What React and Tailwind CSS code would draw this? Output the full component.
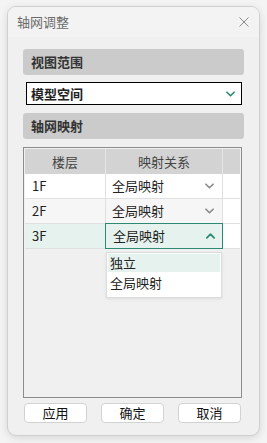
const font = { fontFamily: '"Noto Sans CJK SC", "Noto Sans", sans-serif' }

function ChevronDown({ className }) {
  return (
    <svg viewBox="0 0 10 6" className={className} fill="none">
      <path d="M1 1l4 4 4-4" stroke="currentColor" strokeWidth="1.8" strokeLinecap="round" strokeLinejoin="round" />
    </svg>
  )
}

function ChevronUp({ className }) {
  return (
    <svg viewBox="0 0 10 6" className={className} fill="none">
      <path d="M1 5l4-4 4 4" stroke="currentColor" strokeWidth="2" strokeLinecap="round" strokeLinejoin="round" />
    </svg>
  )
}

const rows = [
  { floor: '1F', value: '全局映射', bg: 'bg-white' },
  { floor: '2F', value: '全局映射', bg: 'bg-[#f6f6f6]' },
  { floor: '3F', value: '全局映射', bg: 'bg-[#e6f2ee]', active: true },
]

export default function App() {
  return (
    <div className="h-[443px] w-[267px] overflow-hidden bg-[#f4f4f4] pl-[7px] pt-[6px]" style={font}>
      <div className="flex h-[430px] w-[253px] flex-col overflow-hidden rounded-[9px] border border-[#cfcfcf] bg-[#f0f0f0] shadow-[0_2px_8px_rgba(0,0,0,0.12)]">
        {/* title bar */}
        <div className="flex h-[30px] shrink-0 items-center justify-between bg-[#f3f3f3] pl-[9px] pr-[10px]">
          <span className="text-[13px] text-[#6b6b6b]">轴网调整</span>
          <svg viewBox="0 0 10 10" className="h-[10px] w-[10px]" fill="none">
            <path d="M0.5 0.5l9 9M9.5 0.5l-9 9" stroke="#8a8a8a" strokeWidth="1" />
          </svg>
        </div>

        {/* body */}
        <div className="flex flex-1 flex-col px-[15px] pt-[12px]">
          <div className="flex h-[26px] items-center rounded-[3px] bg-[#cbcbcb] pl-[8px] text-[13px] font-bold text-[#333]">
            视图范围
          </div>

          <div className="ml-[3px] mr-[2px] mt-[7px] flex h-[23px] items-center justify-between border-[1.5px] border-black bg-white pl-[4px] pr-[6px]">
            <span className="text-[13px] font-semibold text-[#222]">模型空间</span>
            <ChevronDown className="h-[6px] w-[9px] text-[#2a8a72]" />
          </div>

          <div className="mt-[8px] flex h-[26px] items-center rounded-[3px] bg-[#cbcbcb] pl-[8px] text-[13px] font-bold text-[#333]">
            轴网映射
          </div>

          {/* table */}
          <div className="relative mr-[2px] mt-[8px] h-[251px] border border-[#8c8c8c] bg-[#f0f0f0] p-px">
            <div className="flex h-[25px] bg-[#d3d3d3] text-[13px] text-[#444]">
              <div className="flex w-[81px] items-center justify-center border-r border-[#e6e6e6]">楼层</div>
              <div className="flex w-[117px] items-center justify-center border-r border-[#e6e6e6]">映射关系</div>
              <div className="flex-1" />
            </div>
            {rows.map((r) => (
              <div key={r.floor} className={`flex h-[25px] border-b border-[#e0e0e0] text-[13px] text-[#222] ${r.bg}`}>
                <div className="flex w-[81px] items-center border-r border-[#e0e0e0] pl-[7px]">{r.floor}</div>
                {r.active ? (
                  <div className="-my-px -ml-px flex h-[26px] w-[118px] items-center justify-between border-[1.5px] border-[#2a8a72] pl-[7px] pr-[7px]">
                    <span>{r.value}</span>
                    <ChevronUp className="h-[6px] w-[9px] text-[#2a8a72]" />
                  </div>
                ) : (
                  <div className="flex w-[117px] items-center justify-between border-r border-[#e0e0e0] pl-[6px] pr-[8px]">
                    <span>{r.value}</span>
                    <ChevronDown className="h-[6px] w-[9px] text-[#8a8a8a]" />
                  </div>
                )}
                <div className="flex-1 bg-white" />
              </div>
            ))}

            {/* open dropdown */}
            <div className="absolute left-[82px] top-[104px] w-[116px] border border-[#dcdcdc] bg-white p-px text-[13px] text-[#222] shadow-[0_1px_3px_rgba(0,0,0,0.08)]">
              <div className="flex h-[18px] items-center bg-[#e6f2ee] pl-[2px]">独立</div>
              <div className="flex h-[22px] items-center pl-[2px]">全局映射</div>
              <div className="h-[2px]" />
            </div>
          </div>

          {/* buttons */}
          <div className="mt-[5px] flex justify-between pl-px pr-[3px]">
            {['应用', '确定', '取消'].map((t) => (
              <button
                key={t}
                type="button"
                className="flex h-[20px] w-[63px] items-center justify-center rounded-[4px] border border-[#d2d2d2] bg-white text-[13px] text-[#111]"
              >
                {t}
              </button>
            ))}
          </div>
        </div>
      </div>
    </div>
  )
}
